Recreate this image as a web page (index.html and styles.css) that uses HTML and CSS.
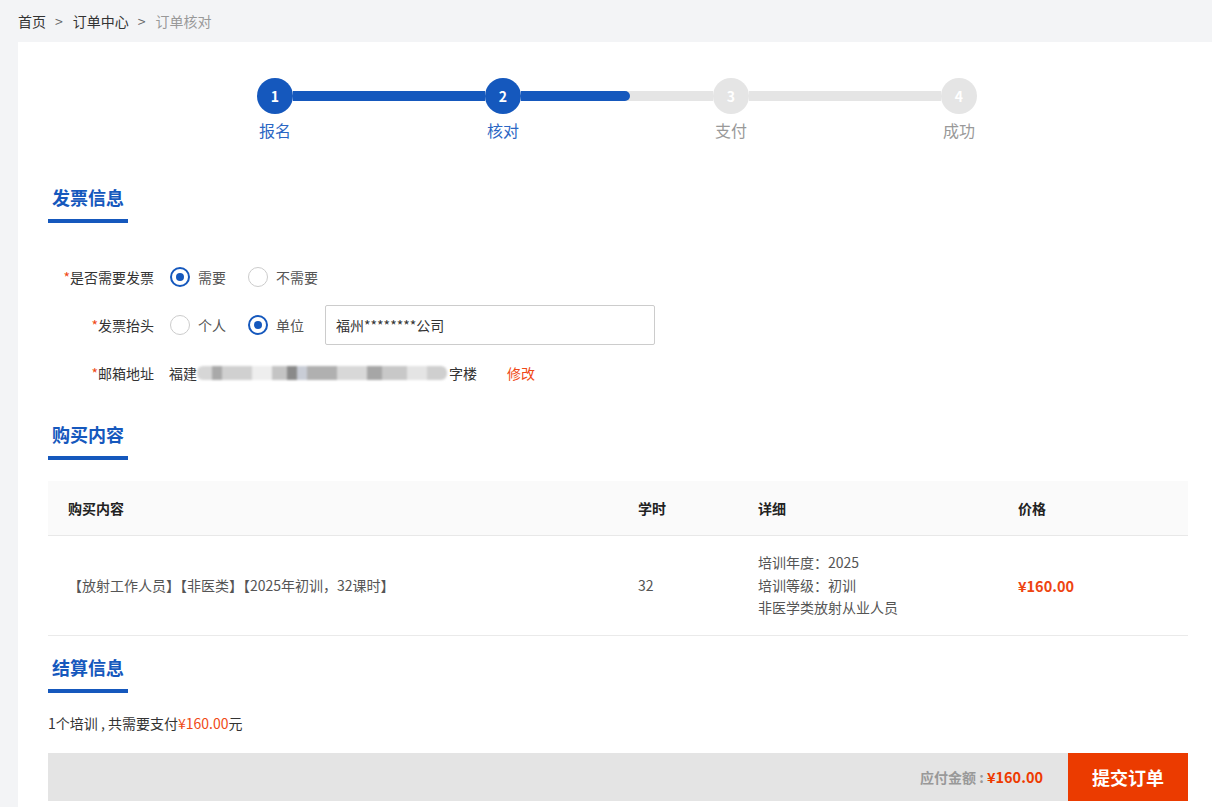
FILE: index.html
```html
<!DOCTYPE html>
<html lang="zh-CN">
<head>
  <meta charset="UTF-8" />
  <title>订单核对</title>
  <link rel="stylesheet" href="styles.css">
</head>
<body>
  <div class="crumbs">
    <a href="#">首页</a><span class="sep">&gt;</span><a href="#">订单中心</a><span class="sep">&gt;</span><span class="cur">订单核对</span>
  </div>

  <div class="panel">
    <div class="steps">
      <div class="step on"><i>1</i><span>报名</span></div>
      <div class="bar full"></div>
      <div class="step on"><i>2</i><span>核对</span></div>
      <div class="bar"><b class="half"></b></div>
      <div class="step"><i>3</i><span>支付</span></div>
      <div class="bar"></div>
      <div class="step"><i>4</i><span>成功</span></div>
    </div>

    <div class="sec-title">发票信息</div>

    <div class="form">
      <div class="form-row">
        <div class="form-label"><em>*</em>是否需要发票</div>
        <label class="opt"><span class="radio checked"></span>需要</label>
        <label class="opt"><span class="radio"></span>不需要</label>
      </div>
      <div class="form-row">
        <div class="form-label"><em>*</em>发票抬头</div>
        <label class="opt"><span class="radio"></span>个人</label>
        <label class="opt"><span class="radio checked"></span>单位</label>
        <input class="text-input" type="text" value="福州********公司">
      </div>
      <div class="form-row">
        <div class="form-label"><em>*</em>邮箱地址</div>
        <div class="address">福建<span class="blur"></span>字楼</div>
        <a class="edit" href="#">修改</a>
      </div>
    </div>

    <div class="sec-title">购买内容</div>

    <table class="goods">
      <colgroup>
        <col style="width:570px"><col style="width:120px"><col style="width:260px"><col>
      </colgroup>
      <thead>
        <tr><th>购买内容</th><th>学时</th><th>详细</th><th>价格</th></tr>
      </thead>
      <tbody>
        <tr>
          <td>【放射工作人员】【非医类】【2025年初训，32课时】</td>
          <td>32</td>
          <td class="detail">培训年度：2025<br>培训等级：初训<br>非医学类放射从业人员</td>
          <td class="price">¥160.00</td>
        </tr>
      </tbody>
    </table>

    <div class="sec-title">结算信息</div>

    <p class="summary">1个培训 , 共需要支付<span>¥160.00</span>元</p>

    <div class="paybar">
      <div class="total">应付金额 : <span>¥160.00</span></div>
      <a class="submit" href="#">提交订单</a>
    </div>
  </div>
</body>
</html>
```

FILE: styles.css
```css
* {
  box-sizing: border-box;
}

body {
  margin: 0;
  background-color: #f3f4f6;
  font-family: "Noto Sans CJK SC", "Noto Sans", sans-serif;
  font-size: 14px;
  color: #333;
}

a {
  text-decoration: none;
  color: inherit;
}

.crumbs {
  height: 42px;
  line-height: 42px;
  padding-left: 18px;
  color: #333;
}

.crumbs .sep {
  margin: 0 10px 0 9px;
  color: #666;
}

.crumbs .cur {
  color: #999;
}

.panel {
  margin-left: 18px;
  background-color: #fff;
  padding: 36px 24px 40px 30px;
  min-height: 800px;
}

/* steps */
.steps {
  display: flex;
  align-items: flex-start;
  width: 720px;
  margin: 0 auto 0 209px;
}

.step {
  width: 36px;
  display: flex;
  flex-direction: column;
  align-items: center;
}

.step i {
  width: 36px;
  height: 36px;
  border-radius: 50%;
  background-color: #e5e5e5;
  color: #fff;
  font-style: normal;
  font-weight: bold;
  font-size: 14px;
  display: flex;
  align-items: center;
  justify-content: center;
}

.step span {
  white-space: nowrap;
  margin-top: 5px;
  font-size: 16px;
  line-height: 22px;
  color: #999;
}

.step.on i {
  background-color: #1558bd;
}

.step.on span {
  color: #2c67c4;
}

.bar {
  flex: 1;
  height: 10px;
  margin-top: 13px;
  background-color: #e5e5e5;
  display: flex;
}

.bar.full {
  background-color: #1558bd;
}

.bar b {
  display: block;
  height: 10px;
  background-color: #1558bd;
  border-radius: 0 5px 5px 0;
}

.bar b.half {
  width: 57%;
}

/* section titles */
.sec-title {
  width: 80px;
  text-align: center;
  font-size: 18px;
  font-weight: bold;
  line-height: 24px;
  color: #1558bd;
  padding-bottom: 10px;
  border-bottom: 4px solid #1558bd;
  margin-top: 44px;
}

/* form */
.form {
  margin-top: 34px;
  display: flex;
  flex-direction: column;
  gap: 8px;
}

.form-row {
  height: 40px;
  display: flex;
  align-items: center;
}

.form-label {
  width: 106px;
  text-align: right;
  margin-right: 16px;
  color: #333;
}

.form-label em {
  font-style: normal;
  color: #f04a16;
}

.opt {
  display: flex;
  align-items: center;
  margin-right: 22px;
  color: #555;
  cursor: pointer;
}

.radio {
  width: 20px;
  height: 20px;
  border-radius: 50%;
  border: 1.5px solid #ccc;
  margin-right: 8px;
  display: flex;
  align-items: center;
  justify-content: center;
}

.radio.checked {
  border: 2px solid #1558bd;
}

.radio.checked::after {
  content: "";
  width: 8px;
  height: 8px;
  border-radius: 50%;
  background-color: #1558bd;
}

.text-input {
  width: 330px;
  height: 40px;
  margin-left: -1px;
  border: 1px solid #ccc;
  border-radius: 2px;
  padding: 0 10px;
  font-family: inherit;
  font-size: 14px;
  color: #333;
}

.address {
  display: flex;
  align-items: center;
  margin-left: -1px;
  color: #333;
}

.blur {
  display: inline-block;
  width: 250px;
  height: 14px;
  margin: 0 2px 0 0;
  border-radius: 6px;
  filter: blur(1px);
  background: linear-gradient(90deg,
    #d6d6d6 0 6%, #a9a9a9 6% 10%, #d0d0d0 10% 22%, #eeeeee 22% 30%,
    #c4c4c4 30% 36%, #8a8a8a 36% 40%, #c9cdd6 40% 44%, #b0b0b0 44% 56%,
    #d8d8d8 56% 68%, #a6a6a6 68% 74%, #c8c8c8 74% 84%, #e4e4e4 84% 92%, #cfcfcf 92% 100%);
}

.edit {
  margin-left: 30px;
  color: #f04a16;
}

/* goods table */
.goods {
  width: 100%;
  margin-top: 21px;
  border-collapse: collapse;
  table-layout: fixed;
}

.goods th {
  height: 54px;
  background-color: #fafafa;
  text-align: left;
  padding-left: 20px;
  font-weight: bold;
  color: #222;
  border-bottom: 1px solid #e8e8e8;
}

.goods td {
  height: 100px;
  padding-left: 20px;
  color: #555;
  border-bottom: 1px solid #eaeaea;
}

.goods td.detail {
  line-height: 22.5px;
}

.goods td.price {
  color: #ee4411;
  font-weight: bold;
  font-size: 14.5px;
}

.goods + .sec-title {
  margin-top: 19px;
}

.form + .sec-title {
  margin-top: 29px;
}

.summary {
  margin: 20px 0 0;
  line-height: 20px;
  color: #333;
}

.summary span {
  color: #f04a16;
}

/* pay bar */
.paybar {
  margin-top: 20px;
  height: 48px;
  display: flex;
  justify-content: flex-end;
  background-color: #e4e4e4;
}

.total {
  display: flex;
  align-items: center;
  padding-right: 25px;
  font-weight: bold;
  color: #999;
  white-space: pre;
}

.total span {
  color: #ee3a00;
  font-size: 14.5px;
}

.submit {
  width: 120px;
  display: flex;
  align-items: center;
  justify-content: center;
  background-color: #eb3b00;
  color: #fff;
  font-size: 18px;
  font-weight: bold;
}
```
